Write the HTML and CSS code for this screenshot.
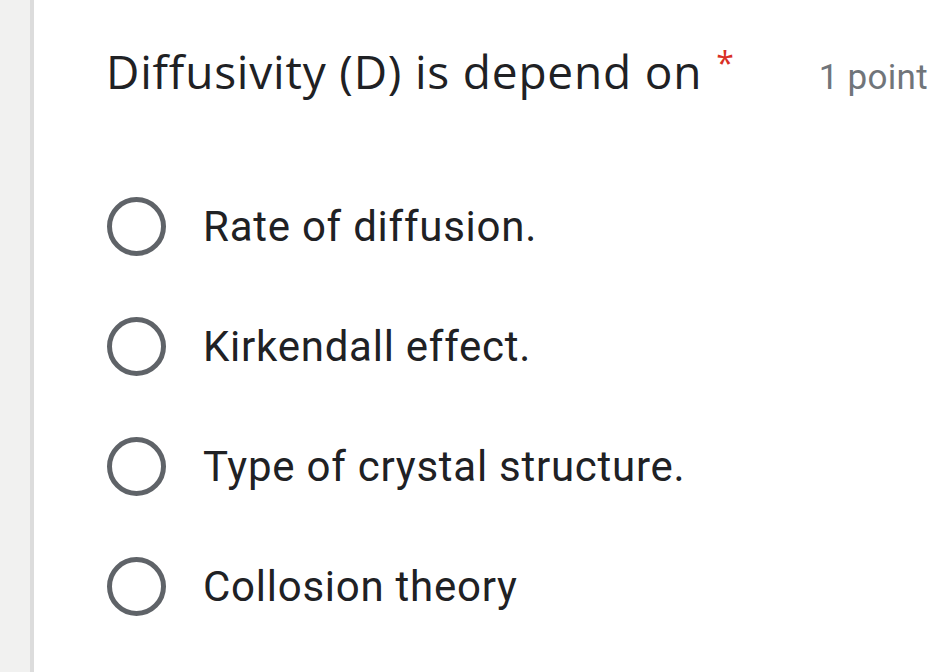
FILE: index.html
```html
<!DOCTYPE html>
<html>
<head>
<meta charset="utf-8">
<link rel="stylesheet" href="styles.css">
</head>
<body>
<div class="page">
  <div class="side"></div>
  <div class="card">
    <div class="head">
      <div class="title">Diffusivity (D) is depend on<span class="req">*</span></div>
      <div class="points">1 point</div>
    </div>
    <div class="options">
      <div class="opt"><span class="radio"></span><span class="label">Rate of diffusion.</span></div>
      <div class="opt"><span class="radio"></span><span class="label">Kirkendall effect.</span></div>
      <div class="opt"><span class="radio"></span><span class="label">Type of crystal structure.</span></div>
      <div class="opt"><span class="radio"></span><span class="label">Collosion theory</span></div>
    </div>
  </div>
</div>
</body>
</html>
```

FILE: styles.css
```css
html, body { margin: 0; padding: 0; background: #fff; }
.page { display: flex; width: 944px; height: 672px; overflow: hidden; }
.side { width: 30px; background: #f1f1f0; border-right: 4px solid #dcdcdc; flex: none; }
.card { flex: 1; padding-left: 72px; padding-top: 41px; box-sizing: border-box; }
.head { display: flex; align-items: baseline; }
.title { font-family: "Open Sans", sans-serif; font-size: 46px; color: #202124; line-height: 60px; letter-spacing: 0.8px; }
.req { color: #d93025; font-size: 32px; margin-left: 14px; position: relative; top: -14px; }
.points { margin-left: auto; font-family: Roboto, sans-serif; font-size: 35px; color: #70757a; margin-right: 16px; letter-spacing: 0.3px; }
.options { margin-top: 90px; display: flex; flex-direction: column; gap: 61px; }
.opt { display: flex; align-items: center; height: 59px; }
.radio { width: 49px; height: 49px; border: 5px solid #5f6368; border-radius: 50%; flex: none; margin-left: 1px; }
.label { font-family: Roboto, sans-serif; font-size: 42px; color: #202124; margin-left: 37px; letter-spacing: 0.75px; }
```
